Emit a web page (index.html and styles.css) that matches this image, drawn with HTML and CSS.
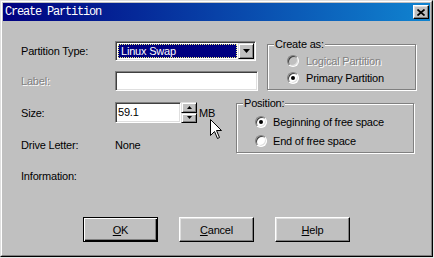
FILE: index.html
```html
<!DOCTYPE html>
<html lang="en">
<head>
  <meta charset="UTF-8" />
  <title>Create Partition</title>
  <link rel="stylesheet" href="styles.css">
</head>
<body>
  <div class="window">
    <div class="frame">
      <div class="titlebar">
        <span class="title">Create Partition</span>
        <span class="close-btn">
          <svg width="8" height="7" viewBox="0 0 8 7"><path d="M0.5 0.5 L7.5 6.5 M7.5 0.5 L0.5 6.5" stroke="#000" stroke-width="1.7" fill="none"/></svg>
        </span>
      </div>

      <div class="dialog-body">
        <div class="top-section">
          <div class="fields">
            <div class="field-row">
              <span class="field-label">Partition Type:</span>
              <div class="combo">
                <span class="combo-value">Linux Swap</span>
                <span class="combo-btn">
                  <svg width="7" height="4" viewBox="0 0 7 4"><polygon points="0,0 7,0 3.5,4" fill="#000"/></svg>
                </span>
              </div>
            </div>
            <div class="field-row second">
              <span class="field-label disabled">Label:</span>
              <div class="textbox label-box"></div>
            </div>
          </div>

          <div class="groupbox create-group">
            <span class="group-title">Create as:</span>
            <div class="radio-row disabled"><span class="radio"></span>Logical Partition</div>
            <div class="radio-row"><span class="radio checked"></span>Primary Partition</div>
          </div>
        </div>

        <div class="mid-section">
          <div class="size-col">
            <div class="field-row size-row">
              <span class="field-label">Size:</span>
              <div class="textbox size-box">59.1</div>
              <div class="spinner">
                <span class="spin-btn">
                  <svg width="5" height="3" viewBox="0 0 5 3"><polygon points="2.5,0 5,3 0,3" fill="#000"/></svg>
                </span>
                <span class="spin-btn">
                  <svg width="5" height="3" viewBox="0 0 5 3"><polygon points="0,0 5,0 2.5,3" fill="#000"/></svg>
                </span>
              </div>
              <span class="unit">MB</span>
              <svg class="cursor" width="13" height="21" viewBox="0 0 13 21">
                <path d="M0.5 0.5 L0.5 16.5 L4.5 12.5 L7.5 19.5 L9.5 18.5 L6.5 11.5 L11.5 11.5 Z" fill="#fff" stroke="#000" stroke-width="1"/>
              </svg>
            </div>
            <div class="field-row drive-row">
              <span class="field-label">Drive Letter:</span>
              <span>None</span>
            </div>
          </div>

          <div class="groupbox position-group">
            <span class="group-title">Position:</span>
            <div class="radio-row"><span class="radio checked"></span>Beginning of free space</div>
            <div class="radio-row"><span class="radio"></span>End of free space</div>
          </div>
        </div>

        <div class="info-row">Information:</div>

        <div class="button-row">
          <button class="win-btn default"><u>O</u>K</button>
          <button class="win-btn"><u>C</u>ancel</button>
          <button class="win-btn"><u>H</u>elp</button>
        </div>
      </div>
    </div>
  </div>
</body>
</html>
```

FILE: styles.css
```css
body {
  margin: 0;
  background-color: #e8e8e8;
  font-family: "Liberation Sans", Arial, sans-serif;
  font-size: 11px;
  letter-spacing: -0.2px;
  color: #000;
}
.window {
  width: 433px;
  height: 257px;
  box-sizing: border-box;
  border: 1px solid;
  border-color: #dfdfdf #000 #000 #dfdfdf;
  background-color: #c0c0c0;
}
.frame {
  height: 100%;
  box-sizing: border-box;
  border: 1px solid;
  border-color: #fff #808080 #808080 #fff;
  padding: 1px;
}
.titlebar {
  height: 18px;
  display: flex;
  align-items: center;
  justify-content: space-between;
  padding: 0 1px 0 2px;
  background: linear-gradient(90deg, #000080, #1084d0);
}
.title {
  font-family: "Liberation Mono", "DejaVu Sans Mono", monospace;
  font-size: 12px;
  letter-spacing: -1.2px;
  color: #fff;
}
.close-btn {
  width: 16px;
  height: 14px;
  box-sizing: border-box;
  display: flex;
  align-items: center;
  justify-content: center;
  background-color: #c0c0c0;
  border: 1px solid;
  border-color: #fff #000 #000 #fff;
  box-shadow: inset -1px -1px #808080, inset 1px 1px #dfdfdf;
}
.dialog-body {
  padding-left: 18px;
}

/* top block: type, label, create as */
.top-section {
  display: flex;
  margin-top: 17px;
}
.fields {
  width: 246px;
  padding-top: 3px;
}
.field-row {
  display: flex;
  align-items: center;
  height: 20px;
}
.field-row.second {
  margin-top: 10px;
}
.field-label {
  width: 94px;
  flex-shrink: 0;
}
.disabled {
  color: #808080;
  text-shadow: 1px 1px 0 #fff;
}
.textbox,
.combo {
  box-sizing: border-box;
  height: 20px;
  background-color: #fff;
  border: 1px solid;
  border-color: #808080 #fff #fff #808080;
  box-shadow: inset 1px 1px #404040, inset -1px -1px #dfdfdf;
}
.combo {
  width: 141px;
  display: flex;
  padding: 1px;
}
.combo-value {
  flex: 1;
  margin: 1px;
  padding-left: 2px;
  line-height: 12px;
  background-color: #000080;
  color: #fff;
  border: 1px dotted #f0f080;
}
.combo-btn {
  width: 16px;
  height: 16px;
  box-sizing: border-box;
  display: flex;
  align-items: center;
  justify-content: center;
  background-color: #c0c0c0;
  border: 1px solid;
  border-color: #dfdfdf #000 #000 #dfdfdf;
  box-shadow: inset 1px 1px #fff, inset -1px -1px #808080;
}
.label-box {
  width: 143px;
}

/* group boxes */
.groupbox {
  position: relative;
  box-sizing: border-box;
  border: 1px solid #808080;
  box-shadow: 1px 1px 0 #fff, inset 1px 1px 0 #fff;
}
.group-title {
  position: absolute;
  top: -7px;
  left: 6px;
  padding: 0 1px;
  line-height: 13px;
  background-color: #c0c0c0;
}
.create-group {
  width: 149px;
  height: 46px;
  margin-top: 6px;
  padding: 8px 0 0 19px;
}
.radio-row {
  display: flex;
  align-items: center;
  gap: 7px;
  height: 16px;
  margin-bottom: 1px;
}
.radio {
  width: 12px;
  height: 12px;
  box-sizing: border-box;
  border-radius: 50%;
  background-color: #fff;
  border: 1px solid;
  border-color: #808080 #fff #fff #808080;
  box-shadow: inset 1px 1px #404040, inset -1px -1px #dfdfdf;
  display: flex;
  align-items: center;
  justify-content: center;
  text-shadow: none;
}
.radio-row.disabled .radio {
  background-color: #c0c0c0;
}
.radio.checked::after {
  content: "";
  width: 4px;
  height: 4px;
  border-radius: 50%;
  background-color: #000;
}

/* size + position */
.mid-section {
  display: flex;
  margin-top: 11px;
}
.size-col {
  width: 215px;
}
.size-row {
  position: relative;
  height: 21px;
}
.size-box {
  width: 66px;
  height: 21px;
  padding: 3px 0 0 2px;
}
.spinner {
  width: 16px;
  height: 21px;
  display: flex;
  flex-direction: column;
}
.spin-btn {
  flex: 1;
  box-sizing: border-box;
  display: flex;
  align-items: center;
  justify-content: center;
  background-color: #c0c0c0;
  border: 1px solid;
  border-color: #dfdfdf #000 #000 #dfdfdf;
  box-shadow: inset 1px 1px #fff, inset -1px -1px #808080;
}
.unit {
  margin-left: 2px;
}
.cursor {
  position: absolute;
  left: 189px;
  top: 17px;
}
.drive-row {
  height: 14px;
  margin-top: 15px;
}
.position-group {
  width: 178px;
  height: 50px;
  margin-top: 1px;
  padding: 9px 0 0 18px;
}
.position-group .radio-row {
  height: 17px;
  margin-bottom: 2px;
  gap: 6px;
}

.info-row {
  height: 14px;
  line-height: 14px;
  margin-top: 16px;
}

/* buttons */
.button-row {
  display: flex;
  gap: 21px;
  margin-top: 34px;
  padding-left: 62px;
}
.win-btn {
  width: 75px;
  height: 25px;
  padding: 0;
  font-family: "Liberation Sans", Arial, sans-serif;
  font-size: 11px;
  letter-spacing: -0.2px;
  color: #000;
  background-color: #c0c0c0;
  border: 1px solid;
  border-color: #fff #000 #000 #fff;
  box-shadow: inset -1px -1px #808080, inset 1px 1px #dfdfdf;
}
.win-btn.default {
  border-color: #000;
  box-shadow: inset 1px 1px #fff, inset -1px -1px #000, inset -2px -2px #808080;
}
```
